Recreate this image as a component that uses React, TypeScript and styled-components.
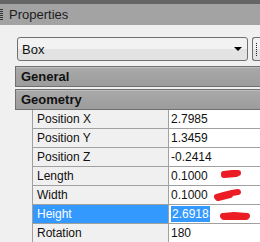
import React from 'react';
import styled, {createGlobalStyle} from 'styled-components';

const Global = createGlobalStyle`
  body {
    margin: 0;
    background: #f0f0f0;
    font-family: "Liberation Sans", Arial, sans-serif;
    font-size: 12px;
    color: #111;
  }
`;

const Panel = styled.div`
  width: 260px;
  height: 242px;
  overflow: hidden;
  background: #f0f0f0;
`;

const TitleBar = styled.div`
  height: 21px;
  border-top: 4px solid #656565;
  background: #a3a3a3;
  display: flex;
  align-items: center;
  gap: 6px;
  font-size: 13px;
  color: #1c1c1c;
`;

const Grip = styled.div`
  width: 3px;
  height: 11px;
  background: repeating-linear-gradient(#333 0 1px, transparent 1px 2px);
`;

const Body = styled.div`
  padding: 12px 0 0 15px;
`;

const ComboRow = styled.div`
  display: flex;
  gap: 4px;
  padding-left: 2px;
  height: 24px;
`;

const Combo = styled.div`
  width: 231px;
  box-sizing: border-box;
  border: 1px solid #707070;
  border-radius: 3px;
  background: linear-gradient(#f2f2f2 0 50%, #e3e3e3 50% 100%);
  display: flex;
  align-items: center;
  justify-content: space-between;
  padding: 0 5px 0 4px;
  font-size: 13px;
`;

const Arrow = styled.div`
  width: 0;
  height: 0;
  border-left: 4px solid transparent;
  border-right: 4px solid transparent;
  border-top: 4px solid #000;
`;

const SideButton = styled.div`
  flex: 1;
  border: 1px solid #707070;
  border-right: none;
  border-radius: 3px 0 0 3px;
  background: linear-gradient(#f2f2f2 0 50%, #e3e3e3 50% 100%);
  display: flex;
  align-items: center;
  padding-left: 3px;
  &::before {
    content: '';
    width: 1px;
    height: 13px;
    background: repeating-linear-gradient(#222 0 1px, transparent 1px 2px);
  }
`;

const Section = styled.div<{ $first?: boolean }>`
  margin-top: ${p => (p.$first ? '5px' : '2px')};
  height: 19px;
  border: 1px solid #6f6f6f;
  border-right: none;
  background: linear-gradient(#a9a9a9, #9c9c9c);
  box-shadow: inset 0 1px 0 #bdbdbd;
  display: flex;
  align-items: center;
  padding-left: 5px;
  font-weight: bold;
  font-size: 13px;
  color: #111;
`;

const Grid = styled.div`
  margin-left: 17px;
  display: grid;
  grid-template-columns: 136px 1fr;
  grid-auto-rows: 19px;
  border-left: 1px solid #a0a0a0;
`;

const NameCell = styled.div<{ $sel?: boolean }>`
  box-sizing: border-box;
  border-bottom: 1px solid #a0a0a0;
  border-right: 1px solid #a0a0a0;
  background-color: ${p => (p.$sel ? '#3399ff' : '#f0f0f0')};
  color: ${p => (p.$sel ? '#ffffff' : '#111111')};
  display: flex;
  align-items: center;
  padding-left: 4px;
`;

const ValueCell = styled.div`
  box-sizing: border-box;
  border-bottom: 1px solid #a0a0a0;
  background: #fff;
  display: flex;
  align-items: center;
  padding-left: 2px;
  gap: 2px;
`;

const Selected = styled.span`
  background-color: #3399ff;
  color: #ffffff;
  padding: 1px 1px;
`;

const Scribble = ({d}: { d: string }) => (
  <svg width="44" height="18" viewBox="0 0 44 18" style={{flex: 'none'}}>
    <path d={d} fill="none" stroke="#ec1c24" strokeWidth="6" strokeLinecap="round" strokeLinejoin="round"/>
  </svg>
);

type Row = { name: string; value: string; scribble?: string; sel?: boolean };

const rows: Row[] = [
  {name: 'Position X', value: '2.7985'},
  {name: 'Position Y', value: '1.3459'},
  {name: 'Position Z', value: '-0.2414'},
  {name: 'Length', value: '0.1000', scribble: 'M14 7 L22 6 L28 6 M14 8 L26 7'},
  {name: 'Width', value: '0.1000', scribble: 'M7 11 L14 9 L22 7 L28 6 M8 12 L20 9'},
  {name: 'Height', value: '2.6918', scribble: 'M11 11 L22 10 L35 11 M12 12 L34 12', sel: true},
  {name: 'Rotation', value: '180'},
];

export default function App() {
  return (
    <Panel>
      <Global/>
      <TitleBar>
        <Grip/>
        <span>Properties</span>
      </TitleBar>
      <Body>
        <ComboRow>
          <Combo>
            <span>Box</span>
            <Arrow/>
          </Combo>
          <SideButton/>
        </ComboRow>
        <Section $first>General</Section>
        <Section>Geometry</Section>
        <Grid>
          {rows.map(r => (
            <React.Fragment key={r.name}>
              <NameCell $sel={r.sel === true}>{r.name}</NameCell>
              <ValueCell>
                {r.sel ? <Selected>{r.value}</Selected> : <span>{r.value}</span>}
                {r.scribble && <Scribble d={r.scribble}/>}
              </ValueCell>
            </React.Fragment>
          ))}
        </Grid>
      </Body>
    </Panel>
  );
}
